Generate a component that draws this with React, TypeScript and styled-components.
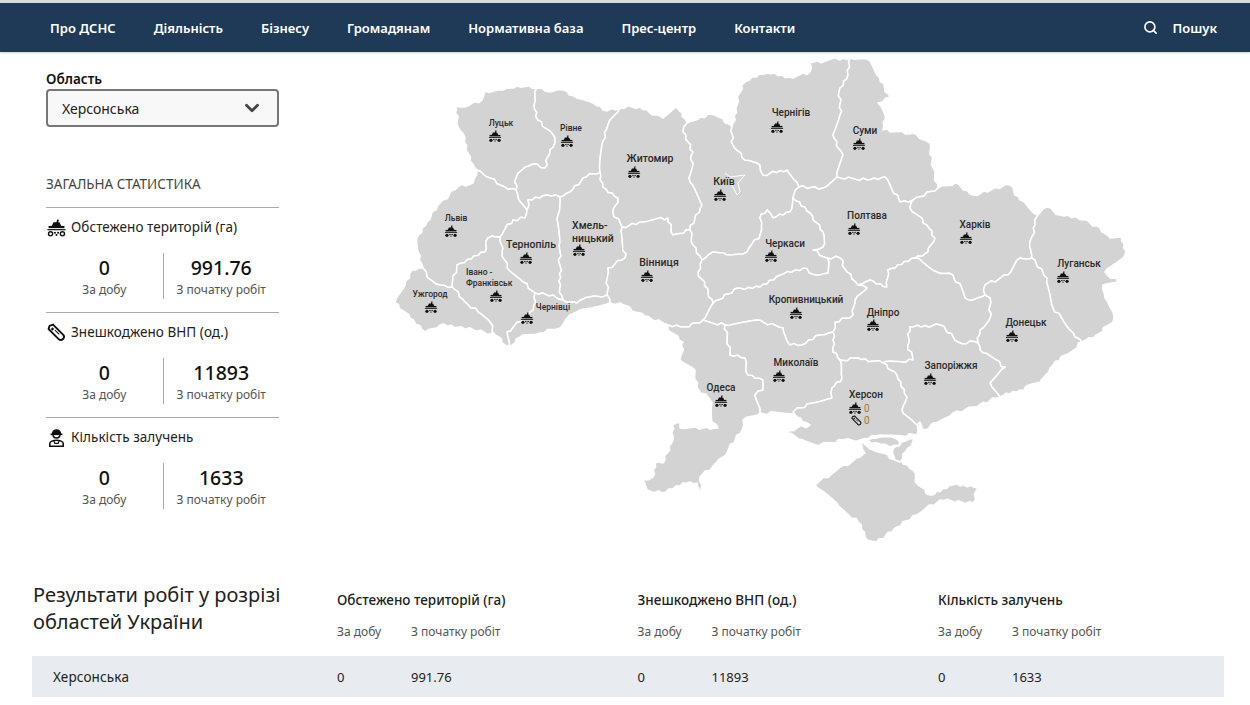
import React from "react";
import styled, { createGlobalStyle } from "styled-components";
import { Search, ChevronDown } from "lucide-react";

const Global = createGlobalStyle`
  html, body { margin: 0; padding: 0; background: #fff; overflow: hidden; }
  body { font-family: "Noto Sans", "Open Sans", sans-serif; color: #1c1c1c; }
  * { box-sizing: border-box; }
`;

type P = [number, number];

/* Border roughening: the same edge gets the same wiggle in both neighbours */
function wiggle(a: P, b: P): P[] {
  const swap = a[0] > b[0] || (a[0] === b[0] && a[1] > b[1]);
  const [s, e] = swap ? [b, a] : [a, b];
  const dx = e[0] - s[0];
  const dy = e[1] - s[1];
  const len = Math.hypot(dx, dy) || 1;
  const n = Math.max(1, Math.floor(len / 3.5));
  const out: P[] = [];
  for (let i = 1; i < n; i++) {
    const h = Math.sin(s[0] * 12.9 + s[1] * 78.2 + e[0] * 3.7 + e[1] * 5.1 + i * 37.7) * 43758.5;
    const r = (h - Math.floor(h) - 0.5) * 3.4;
    out.push([s[0] + (dx * i) / n - (dy / len) * r, s[1] + (dy * i) / n + (dx / len) * r]);
  }
  return swap ? out.reverse() : out;
}

function regionPath(pts: P[]): string {
  const all: P[] = [];
  pts.forEach((p, i) => {
    all.push(p);
    all.push(...wiggle(p, pts[(i + 1) % pts.length]));
  });
  return "M" + all.map((p) => `${p[0].toFixed(1)} ${p[1].toFixed(1)}`).join("L") + "Z";
}

const regions: P[][] = [
  // Volyn
  [[456,106],[464,107],[482,100],[485,91],[503,90],[517,86],[537,88],[534,105],[538,120],[552,133],[555,143],[550,150],[545,168],[533,164],[522,170],[516,178],[516,190],[505,187],[490,178],[477,170],[470,161],[465,138],[458,127]],
  // Rivne
  [[537,88],[550,92],[563,90],[577,98],[593,103],[603,110],[620,108],[608,125],[602,145],[600,172],[583,178],[570,192],[560,197],[547,195],[528,200],[527,210],[518,198],[516,190],[516,178],[522,170],[533,164],[545,168],[550,150],[555,143],[552,133],[538,120],[534,105]],
  // Lviv
  [[417,238],[427,222],[440,203],[458,187],[473,183],[477,170],[490,178],[505,187],[516,190],[518,198],[527,210],[525,218],[513,220],[500,237],[488,238],[485,252],[457,265],[452,287],[440,285],[427,277],[423,268],[418,252]],
  // Ternopil
  [[527,210],[528,200],[547,195],[560,197],[558,215],[560,242],[560,288],[563,300],[553,295],[535,293],[523,282],[507,268],[502,252],[500,237],[513,220],[525,218]],
  // Khmelnytskyi
  [[560,197],[570,192],[583,178],[600,172],[603,187],[618,198],[613,212],[622,227],[625,258],[608,268],[607,295],[590,297],[577,303],[563,300],[560,288],[560,242],[558,215]],
  // Zhytomyr
  [[620,108],[640,107],[653,115],[663,118],[677,107],[687,123],[683,132],[693,152],[690,182],[702,205],[690,230],[673,235],[668,218],[643,222],[622,227],[613,212],[618,198],[603,187],[600,172],[602,145],[608,125]],
  // Kyiv
  [[687,123],[701,117],[715,115],[732,127],[733,145],[745,160],[760,165],[763,175],[787,170],[797,182],[799,187],[793,198],[790,212],[773,218],[767,210],[760,218],[760,235],[747,252],[727,255],[713,252],[702,260],[693,245],[690,230],[702,205],[690,182],[693,152],[683,132]],
  // Chernihiv
  [[732,127],[737,105],[742,85],[752,77],[767,73],[793,78],[810,72],[810,63],[843,58],[850,58],[848,75],[840,88],[840,115],[833,135],[843,155],[837,177],[823,188],[799,187],[797,182],[787,170],[763,175],[760,165],[745,160],[733,145]],
  // Sumy
  [[850,58],[867,59],[877,75],[890,97],[878,103],[885,115],[883,130],[917,135],[930,143],[933,168],[938,188],[913,200],[900,202],[885,177],[867,180],[837,177],[843,155],[833,135],[840,115],[840,88],[848,75]],
  // Poltava
  [[799,187],[823,188],[837,177],[867,180],[885,177],[900,202],[913,200],[910,208],[927,225],[935,238],[928,252],[915,258],[888,270],[887,287],[870,280],[858,285],[847,272],[840,258],[827,258],[813,250],[823,247],[823,232],[810,213],[793,198]],
  // Kharkiv
  [[913,200],[938,188],[955,183],[973,195],[1010,185],[1020,200],[1038,215],[1035,225],[1030,242],[1032,258],[1020,258],[1008,275],[985,285],[985,295],[968,300],[953,275],[937,272],[915,258],[928,252],[935,238],[927,225],[910,208]],
  // Luhansk
  [[1038,215],[1047,207],[1060,215],[1083,220],[1100,228],[1110,238],[1122,237],[1125,255],[1105,272],[1118,282],[1103,285],[1105,298],[1113,312],[1113,322],[1093,338],[1082,342],[1070,330],[1053,308],[1047,278],[1032,258],[1030,242],[1035,225]],
  // Donetsk
  [[1020,258],[1032,258],[1047,278],[1053,308],[1070,330],[1082,342],[1065,355],[1050,368],[1040,382],[1020,390],[1000,397],[990,383],[1005,367],[983,353],[978,343],[980,330],[990,318],[990,298],[985,295],[985,285],[1008,275]],
  // Dnipro
  [[915,258],[937,272],[953,275],[968,300],[985,295],[990,298],[990,318],[980,330],[978,343],[958,342],[940,325],[910,327],[908,345],[913,360],[883,363],[858,358],[840,360],[833,352],[833,332],[835,322],[853,315],[855,300],[867,288],[858,285],[870,280],[887,287],[888,270]],
  // Kropyvnytskyi
  [[703,320],[713,303],[737,288],[760,287],[780,275],[803,268],[817,275],[828,273],[827,258],[840,258],[847,272],[858,285],[867,288],[855,300],[853,315],[835,322],[833,332],[820,335],[802,345],[790,345],[783,328],[757,320],[725,325]],
  // Cherkasy
  [[702,260],[713,252],[727,255],[747,252],[760,235],[760,218],[767,210],[773,218],[790,212],[793,198],[810,213],[823,232],[823,247],[813,250],[827,258],[828,273],[817,275],[803,268],[780,275],[760,287],[737,288],[713,303],[698,272]],
  // Vinnytsia
  [[622,227],[643,222],[668,218],[673,235],[690,230],[693,245],[702,260],[698,272],[713,303],[703,320],[685,327],[668,325],[645,316],[620,303],[610,303],[607,295],[608,268],[625,258]],
  // Chernivtsi
  [[535,293],[553,295],[563,300],[577,303],[590,297],[607,295],[610,303],[580,310],[567,318],[560,328],[540,333],[523,335],[508,347],[507,332],[523,318],[533,310]],
  // Ivano-Frankivsk
  [[457,265],[485,252],[488,238],[500,237],[502,252],[507,268],[523,282],[535,293],[533,310],[523,318],[507,332],[508,347],[495,335],[490,322],[478,312],[465,302],[452,287]],
  // Zakarpattia
  [[395,303],[405,285],[412,270],[423,268],[427,277],[440,285],[452,287],[465,302],[478,312],[490,322],[495,335],[462,327],[440,325],[425,332],[410,318]],
  // Odesa
  [[668,325],[685,327],[703,320],[725,325],[730,355],[745,358],[748,375],[763,380],[763,390],[755,395],[760,413],[743,420],[742,430],[723,457],[700,477],[702,493],[697,483],[683,483],[662,493],[647,490],[643,480],[653,477],[655,463],[663,463],[673,440],[672,425],[680,422],[680,428],[718,428],[712,422],[712,403],[697,387],[695,370],[680,360],[683,342],[668,330]],
  // Mykolaiv
  [[725,325],[757,320],[783,328],[790,345],[802,345],[820,335],[833,332],[833,352],[840,360],[842,378],[832,388],[832,398],[797,408],[797,413],[760,413],[755,395],[763,390],[763,380],[748,375],[745,358],[730,355]],
  // Kherson
  [[833,352],[840,360],[858,358],[883,363],[897,375],[907,397],[902,410],[917,425],[917,435],[880,435],[860,440],[843,440],[820,445],[803,440],[787,433],[797,428],[810,425],[797,417],[793,412],[797,408],[832,398],[832,388],[842,378],[840,360]],
  // Zaporizhzhia
  [[883,363],[913,360],[908,345],[910,327],[940,325],[958,342],[978,343],[983,353],[1005,367],[990,383],[1000,397],[973,407],[953,413],[933,423],[922,433],[920,422],[917,425],[902,410],[907,397],[897,375]],
  // Crimea
  [[815,485],[837,470],[860,457],[865,453],[860,443],[873,450],[897,460],[913,470],[918,485],[930,495],[953,485],[978,487],[973,503],[940,500],[920,513],[897,527],[877,542],[867,540],[858,522],[837,503]],
  // Sivash shallows
  [[868,441],[880,437],[895,438],[900,445],[890,447],[880,444]],
  [[893,449],[905,441],[915,438],[908,448],[900,462],[895,460]],
];

type City = { label: string[]; x: number; y: number; ix: number; iy: number; size: number; start?: boolean };

const cities: City[] = [
  { label: ["Луцьк"], x: 501, y: 126, ix: 495, iy: 136, size: 8.5 },
  { label: ["Рівне"], x: 571, y: 131, ix: 567, iy: 141, size: 8.5 },
  { label: ["Житомир"], x: 650, y: 162, ix: 634, iy: 172, size: 10.5 },
  { label: ["Київ"], x: 724, y: 185, ix: 720, iy: 195, size: 10.5 },
  { label: ["Хмель-", "ницький"], x: 572, y: 229, ix: 579, iy: 250, size: 10.5, start: true },
  { label: ["Тернопіль"], x: 531, y: 248, ix: 526, iy: 258, size: 10.5 },
  { label: ["Вінниця"], x: 659, y: 266, ix: 647, iy: 276, size: 10.5 },
  { label: ["Львів"], x: 456, y: 221, ix: 451, iy: 231, size: 8.5 },
  { label: ["Івано -", "Франківськ"], x: 466, y: 275, ix: 496, iy: 296, size: 8.5, start: true },
  { label: ["Ужгород"], x: 430, y: 297, ix: 431, iy: 307, size: 8.5 },
  { label: ["Чернівці"], x: 553, y: 310, ix: 527, iy: 318, size: 8.5 },
  { label: ["Чернігів"], x: 791, y: 116, ix: 777, iy: 127, size: 10 },
  { label: ["Суми"], x: 865, y: 134, ix: 859, iy: 144, size: 10 },
  { label: ["Полтава"], x: 867, y: 219, ix: 854, iy: 229, size: 10 },
  { label: ["Харків"], x: 975, y: 228, ix: 966, iy: 238, size: 10 },
  { label: ["Луганськ"], x: 1079, y: 267, ix: 1063, iy: 277, size: 10 },
  { label: ["Черкаси"], x: 785, y: 247, ix: 771, iy: 256, size: 10 },
  { label: ["Кропивницький"], x: 806, y: 303, ix: 796, iy: 313, size: 10 },
  { label: ["Дніпро"], x: 883, y: 316, ix: 873, iy: 325, size: 10 },
  { label: ["Донецьк"], x: 1026, y: 326, ix: 1012, iy: 336, size: 10 },
  { label: ["Запоріжжя"], x: 951, y: 369, ix: 930, iy: 379, size: 10 },
  { label: ["Миколаїв"], x: 796, y: 366, ix: 779, iy: 376, size: 10 },
  { label: ["Одеса"], x: 721, y: 391, ix: 721, iy: 401, size: 10 },
  { label: ["Херсон"], x: 866, y: 398, ix: 855, iy: 408, size: 10 },
];

const Page = styled.div`
  width: 1250px;
  height: 705px;
  display: flex;
  flex-direction: column;
  border-top: 3px solid #dcdcdc;
`;

const Header = styled.header`
  height: 49px;
  flex: none;
  background: #1f3a57;
  display: flex;
  align-items: center;
  justify-content: space-between;
  padding: 0 33px 0 50px;
  box-shadow: 0 1px 2px rgba(0, 0, 0, 0.2);
`;

const Nav = styled.nav`
  display: flex;
  gap: 38px;
`;

const NavItem = styled.a`
  color: #fff;
  font-size: 13px;
  font-weight: 600;
  white-space: nowrap;
`;

const SearchBox = styled.div`
  display: flex;
  align-items: center;
  gap: 14px;
  color: #fff;
  font-size: 13px;
  font-weight: 600;
`;

const Main = styled.main`
  display: flex;
  height: 523px;
  flex: none;
`;

const Sidebar = styled.aside`
  width: 233px;
  margin-left: 46px;
  padding-top: 18px;
  flex: none;
`;

const FieldLabel = styled.div`
  font-size: 13.5px;
  font-weight: 600;
  line-height: 18px;
  color: #111;
`;

const Select = styled.div`
  margin-top: 1px;
  height: 38px;
  border: 2px solid #777;
  border-radius: 4px;
  background: #f8f8f8;
  display: flex;
  align-items: center;
  justify-content: space-between;
  padding: 0 14px;
  font-size: 14px;
  color: #222;
`;

const StatsTitle = styled.div`
  margin-top: 47px;
  font-size: 13.5px;
  line-height: 20px;
  color: #444;
  padding-bottom: 13px;
`;

const StatBlock = styled.section`
  border-top: 1px solid #aaa;
  height: 105px;
`;

const StatHead = styled.div`
  height: 38px;
  display: flex;
  align-items: center;
  gap: 5px;
  font-size: 13.5px;
  letter-spacing: 0.05px;
  color: #222;
  padding-left: 1px;
`;

const StatIcon = styled.svg`
  width: 19px;
  height: 19px;
  flex: none;
`;

const StatBody = styled.div`
  display: grid;
  grid-template-columns: 116.5px 1fr;
  margin-top: 7px;
  height: 46px;
`;

const StatCell = styled.div<{ $divided?: boolean }>`
  text-align: center;
  ${(p) => (p.$divided ? "border-left: 1px solid #aaa;" : "")}
`;

const StatValue = styled.div`
  font-size: 19.5px;
  font-weight: 500;
  line-height: 29px;
  color: #111;
`;

const StatCaption = styled.div`
  font-size: 12px;
  line-height: 16px;
  color: #555;
`;

const MapArea = styled.div`
  margin-left: 111px;
  flex: none;
`;

const MapSvg = styled.svg`
  display: block;
  width: 740px;
  height: 523px;
`;

const MapLabel = styled.text<{ $size: number }>`
  font-family: Roboto, sans-serif;
  font-weight: 500;
  font-size: ${(p) => p.$size}px;
  fill: #2a2a2a;
`;

const MapCount = styled.text`
  font-family: Roboto, sans-serif;
  font-size: 10px;
  fill: #a8772c;
`;

const Results = styled.section`
  padding: 0 26px 0 32px;
`;

const ResultsHead = styled.div`
  display: grid;
  grid-template-columns: 305px repeat(3, 300.5px);
  height: 81px;
`;

const ResultsTitle = styled.h2`
  margin: 6px 0 0 1px;
  font-size: 20px;
  font-weight: 400;
  line-height: 27px;
  color: #222;
`;

const ColGroup = styled.div`
  padding-top: 16px;
`;

const ColTitle = styled.div`
  font-size: 13.5px;
  font-weight: 500;
  line-height: 18px;
  color: #222;
`;

const SubRow = styled.div`
  display: flex;
  margin-top: 14px;
`;

const SubCell = styled.div`
  width: 74px;
  font-size: 12px;
  line-height: 18px;
  color: #555;
  white-space: nowrap;
`;

const Row = styled.div`
  display: grid;
  grid-template-columns: 305px repeat(3, 300.5px);
  height: 41px;
  align-items: center;
  background: #e8ebef;
  font-size: 13.5px;
  color: #222;
`;

const RowName = styled.div`
  padding-left: 21px;
  letter-spacing: 0.15px;
`;

const RowValues = styled.div`
  display: flex;
`;

const RowValue = styled.div`
  width: 74px;
  font-size: 13px;
`;

function MineShape({ solid }: { solid?: boolean }) {
  const wheel = solid
    ? { fill: "currentColor", stroke: "none", r: 3 }
    : { fill: "none", stroke: "currentColor", strokeWidth: 1.8, r: 2.6 };
  return (
    <>
      <path d="M13 1.5 L15.2 2.5 L13.8 5.5 H15.8 L18 10 H6 L8.2 5.5 H11.8 Z" fill="currentColor" />
      <rect x="2" y="10" width="20" height="2.8" fill="currentColor" />
      <rect x="0.5" y="14" width="23" height="1.5" fill="currentColor" />
      <circle cx="4.5" cy="20" {...wheel} />
      <circle cx="19.5" cy="20" {...wheel} />
      <circle cx="10" cy="18.6" r="1.3" fill="currentColor" />
      <circle cx="14" cy="18.6" r="1.3" fill="currentColor" />
      <circle cx="12" cy="21.4" r="1.3" fill="currentColor" />
    </>
  );
}

function ShellShape() {
  return (
    <g fill="none" stroke="currentColor" strokeLinejoin="round">
      <path d="M3.2 3.6 L7.6 2 L20.6 15 A4 4 0 0 1 15 20.6 L2 7.6 Z" strokeWidth="2.4" />
      <path d="M8 6.5 L5.8 8.7" strokeWidth="3" />
      <path d="M10 9 L15.5 14.5" strokeWidth="1.4" />
    </g>
  );
}

function WorkerShape() {
  return (
    <g fill="none" stroke="currentColor" strokeWidth="2">
      <path d="M7 7.5 A5 5 0 0 1 17 7.5 Z" fill="currentColor" />
      <path d="M4.5 8 H19.5" />
      <path d="M7.5 9 A4.6 4.6 0 0 0 16.5 9" />
      <path d="M3.5 23 V19.5 C3.5 17 8 15.5 12 15.5 C16 15.5 20.5 17 20.5 19.5 V23 Z" />
      <path d="M8.5 16 L10 19.5 H14 L15.5 16" strokeWidth="1.5" />
    </g>
  );
}

const stats = [
  { title: "Обстежено територій (га)", total: "991.76", icon: <MineShape /> },
  { title: "Знешкоджено ВНП (од.)", total: "11893", icon: <ShellShape /> },
  { title: "Кількість залучень", total: "1633", icon: <WorkerShape /> },
];

const navItems = ["Про ДСНС", "Діяльність", "Бізнесу", "Громадянам", "Нормативна база", "Прес-центр", "Контакти"];

export default function App() {
  return (
    <>
      <Global />
      <Page>
        <Header>
          <Nav>
            {navItems.map((n) => (
              <NavItem key={n}>{n}</NavItem>
            ))}
          </Nav>
          <SearchBox>
            <Search size={15} strokeWidth={2.6} />
            Пошук
          </SearchBox>
        </Header>
        <Main>
          <Sidebar>
            <FieldLabel>Область</FieldLabel>
            <Select>
              Херсонська
              <ChevronDown size={22} strokeWidth={3} color="#444" />
            </Select>
            <StatsTitle>ЗАГАЛЬНА СТАТИСТИКА</StatsTitle>
            {stats.map((s) => (
              <StatBlock key={s.title}>
                <StatHead>
                  <StatIcon viewBox="0 0 24 24" color="#111">
                    {s.icon}
                  </StatIcon>
                  {s.title}
                </StatHead>
                <StatBody>
                  <StatCell>
                    <StatValue>0</StatValue>
                    <StatCaption>За добу</StatCaption>
                  </StatCell>
                  <StatCell $divided>
                    <StatValue>{s.total}</StatValue>
                    <StatCaption>З початку робіт</StatCaption>
                  </StatCell>
                </StatBody>
              </StatBlock>
            ))}
          </Sidebar>
          <MapArea>
            <MapSvg viewBox="390 52 740 523">
              <defs>
                <symbol id="mine" viewBox="0 0 24 24">
                  <MineShape solid />
                </symbol>
                <symbol id="shell" viewBox="0 0 24 24">
                  <ShellShape />
                </symbol>
              </defs>
              {regions.map((r, i) => (
                <path key={i} d={regionPath(r)} fill="#d3d3d3" stroke="#fff" strokeWidth={1.5} strokeLinejoin="round" />
              ))}
              <path d="M725 173 L730 177 L745 175 L738 183 L740 192 L737 195 L733 187 L730 183" fill="none" stroke="#fff" strokeWidth={1} />
              {cities.map((c) => (
                <g key={c.label.join()}>
                  {c.label.map((l, i) => (
                    <MapLabel
                      key={l}
                      $size={c.size}
                      x={c.x}
                      y={c.y + i * (c.size + 2.5)}
                      textAnchor={c.start ? "start" : "middle"}
                    >
                      {l}
                    </MapLabel>
                  ))}
                  <use href="#mine" x={c.ix - 6.5} y={c.iy - 6.5} width={13} height={13} color="#111" />
                </g>
              ))}
              <MapCount x={864} y={411.5}>0</MapCount>
              <use href="#shell" x={851} y={415} width={11} height={11} color="#111" />
              <MapCount x={864} y={423.5}>0</MapCount>
            </MapSvg>
          </MapArea>
        </Main>
        <Results>
          <ResultsHead>
            <ResultsTitle>
              Результати робіт у розрізі
              <br />
              областей України
            </ResultsTitle>
            {stats.map((s) => (
              <ColGroup key={s.title}>
                <ColTitle>{s.title}</ColTitle>
                <SubRow>
                  <SubCell>За добу</SubCell>
                  <SubCell>З початку робіт</SubCell>
                </SubRow>
              </ColGroup>
            ))}
          </ResultsHead>
          <Row>
            <RowName>Херсонська</RowName>
            {stats.map((s) => (
              <RowValues key={s.title}>
                <RowValue>0</RowValue>
                <RowValue>{s.total}</RowValue>
              </RowValues>
            ))}
          </Row>
        </Results>
      </Page>
    </>
  );
}
